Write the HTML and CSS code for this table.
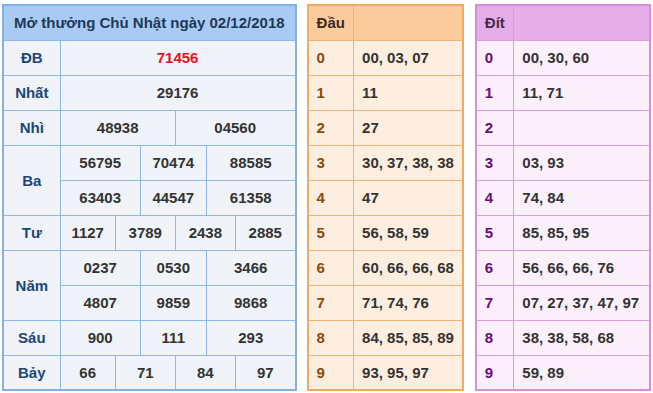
FILE: index.html
```html
<!DOCTYPE html>
<html lang="vi">

<head>
    <meta charset="UTF-8">
    <meta name="viewport" content="width=device-width, initial-scale=1.0">
    <title>Kết quả xổ số 02/12/2018</title>
    <link rel="stylesheet" href="styles.css">
</head>

<body>
    <div class="page">
        <table class="result">
            <colgroup>
                <col class="col-label">
                <col style="width: 55px">
                <col style="width: 25px">
                <col style="width: 35px">
                <col style="width: 31px">
                <col style="width: 29px">
                <col style="width: 60px">
            </colgroup>
            <thead>
                <tr>
                    <th colspan="7">Mở thưởng Chủ Nhật ngày 02/12/2018</th>
                </tr>
            </thead>
            <tbody>
                <tr>
                    <td class="label">ĐB</td>
                    <td colspan="6" class="special">71456</td>
                </tr>
                <tr>
                    <td class="label">Nhất</td>
                    <td colspan="6">29176</td>
                </tr>
                <tr>
                    <td class="label">Nhì</td>
                    <td colspan="3">48938</td>
                    <td colspan="3">04560</td>
                </tr>
                <tr>
                    <td class="label" rowspan="2">Ba</td>
                    <td colspan="2">56795</td>
                    <td colspan="2">70474</td>
                    <td colspan="2">88585</td>
                </tr>
                <tr>
                    <td colspan="2">63403</td>
                    <td colspan="2">44547</td>
                    <td colspan="2">61358</td>
                </tr>
                <tr>
                    <td class="label">Tư</td>
                    <td>1127</td>
                    <td colspan="2">3789</td>
                    <td colspan="2">2438</td>
                    <td>2885</td>
                </tr>
                <tr>
                    <td class="label" rowspan="2">Năm</td>
                    <td colspan="2">0237</td>
                    <td colspan="2">0530</td>
                    <td colspan="2">3466</td>
                </tr>
                <tr>
                    <td colspan="2">4807</td>
                    <td colspan="2">9859</td>
                    <td colspan="2">9868</td>
                </tr>
                <tr>
                    <td class="label">Sáu</td>
                    <td colspan="2">900</td>
                    <td colspan="2">111</td>
                    <td colspan="2">293</td>
                </tr>
                <tr>
                    <td class="label">Bảy</td>
                    <td>66</td>
                    <td colspan="2">71</td>
                    <td colspan="2">84</td>
                    <td>97</td>
                </tr>
            </tbody>
        </table>

        <table class="loto dau">
            <thead>
                <tr>
                    <th class="head">Đầu</th>
                    <th></th>
                </tr>
            </thead>
            <tbody>
                <tr><td class="head">0</td><td>00, 03, 07</td></tr>
                <tr><td class="head">1</td><td>11</td></tr>
                <tr><td class="head">2</td><td>27</td></tr>
                <tr><td class="head">3</td><td>30, 37, 38, 38</td></tr>
                <tr><td class="head">4</td><td>47</td></tr>
                <tr><td class="head">5</td><td>56, 58, 59</td></tr>
                <tr><td class="head">6</td><td>60, 66, 66, 68</td></tr>
                <tr><td class="head">7</td><td>71, 74, 76</td></tr>
                <tr><td class="head">8</td><td>84, 85, 85, 89</td></tr>
                <tr><td class="head">9</td><td>93, 95, 97</td></tr>
            </tbody>
        </table>

        <table class="loto dit">
            <thead>
                <tr>
                    <th class="head">Đít</th>
                    <th></th>
                </tr>
            </thead>
            <tbody>
                <tr><td class="head">0</td><td>00, 30, 60</td></tr>
                <tr><td class="head">1</td><td>11, 71</td></tr>
                <tr><td class="head">2</td><td></td></tr>
                <tr><td class="head">3</td><td>03, 93</td></tr>
                <tr><td class="head">4</td><td>74, 84</td></tr>
                <tr><td class="head">5</td><td>85, 85, 95</td></tr>
                <tr><td class="head">6</td><td>56, 66, 66, 76</td></tr>
                <tr><td class="head">7</td><td>07, 27, 37, 47, 97</td></tr>
                <tr><td class="head">8</td><td>38, 38, 58, 68</td></tr>
                <tr><td class="head">9</td><td>59, 89</td></tr>
            </tbody>
        </table>
    </div>
</body>

</html>
```

FILE: styles.css
```css
* {
    margin: 0;
    padding: 0;
    box-sizing: border-box;
}

body {
    font-family: 'Liberation Sans', Arial, sans-serif;
    background-color: #fff;
    color: #333;
}

.page {
    display: flex;
    align-items: flex-start;
    gap: 10px;
    padding: 4px 2px;
}

table {
    border-collapse: collapse;
    table-layout: fixed;
    font-size: 15px;
    font-weight: bold;
}

tr {
    height: 35px;
}

th,
td {
    padding: 0;
    white-space: nowrap;
}

/* main results table */

.result {
    width: 296px;
    border: 2px solid #85b0e6;
    background-color: #f0f3f8;
}

.result .col-label {
    width: 57px;
}

.result th,
.result td {
    border: 1px solid #8fb7ea;
    text-align: center;
}

.result th {
    background-color: #a9cbf3;
    color: #1e3957;
    font-size: 15px;
}

.result .label {
    color: #1b4777;
}

.result .special {
    color: #e3161b;
}

/* loto tables */

.loto th,
.loto td {
    text-align: left;
    padding-left: 8px;
}

.loto th {
    color: #3b2a1f;
}

.dau {
    width: 158px;
    border: 2px solid #f0aa62;
    background-color: #fdeee0;
}

.dau th,
.dau td {
    border: 1px solid #f2b374;
}

.dau thead tr {
    background-color: #fbcb9b;
}

.dau .head {
    width: 46px;
}

.dau tbody .head {
    color: #8a4a0c;
}

.dit {
    width: 177px;
    margin-left: 1px;
    border: 2px solid #d78fd9;
    background-color: #fcf0fb;
}

.dit th,
.dit td {
    border: 1px solid #dc9cdd;
}

.dit thead tr {
    background-color: #e6aee8;
}

.dit .head {
    width: 38px;
}

.dit th {
    color: #4a2747;
}

.dit tbody .head {
    color: #6b0d78;
}
```
